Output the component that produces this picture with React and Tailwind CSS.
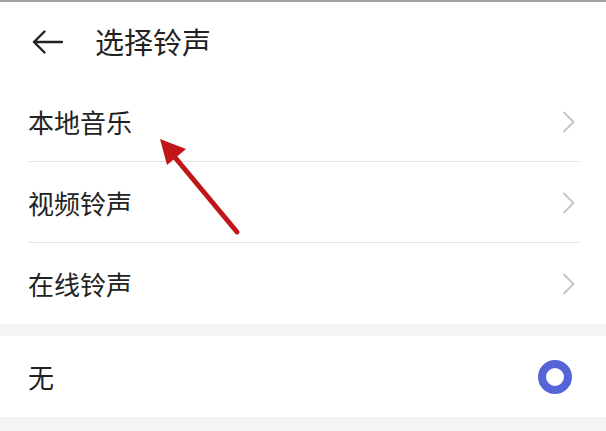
import React from "react";

function Chevron() {
  return (
    <svg width="14" height="22" viewBox="0 0 14 22" fill="none">
      <path d="M2 1.5 L11.5 11 L2 20.5" stroke="#c4c4c4" strokeWidth="1.8" strokeLinecap="round" strokeLinejoin="round" />
    </svg>
  );
}

function Row({ label, divider }) {
  return (
    <div className="relative flex h-[81px] items-center justify-between pl-[28px] pr-[30px]">
      <span className="text-[26px] leading-none text-[#222]">{label}</span>
      <Chevron />
      {divider && <div className="absolute bottom-0 left-[28px] right-[27px] h-px bg-[#e3e3e3]" />}
    </div>
  );
}

export default function App() {
  return (
    <div
      className="relative flex h-[431px] w-[606px] flex-col overflow-hidden border-t-2 border-[#a3a3a3] bg-white"
      style={{ fontFamily: '"Noto Sans CJK SC", "Noto Sans", sans-serif' }}
    >
      <div className="flex h-[79px] items-center pl-[32px]">
        <svg width="31" height="24" viewBox="0 0 31 24" fill="none">
          <path d="M30 12 H2 M12.5 1.5 L2 12 L12.5 22.5" stroke="#222" strokeWidth="2.4" strokeLinecap="round" strokeLinejoin="round" />
        </svg>
        <span className="ml-[32px] text-[29px] leading-none text-[#222]">选择铃声</span>
      </div>
      <Row label="本地音乐" divider />
      <Row label="视频铃声" divider />
      <Row label="在线铃声" />
      <div className="h-[12px] bg-[#f4f4f4]" />
      <div className="flex h-[81px] items-center justify-between pl-[28px] pr-[34px]">
        <span className="text-[26px] leading-none text-[#222]">无</span>
        <div className="h-[34px] w-[34px] rounded-full border-[8px] border-[#5565d8]" />
      </div>
      <div className="flex-1 bg-[#f4f4f4]" />
      <svg className="pointer-events-none absolute left-0 top-0" width="606" height="431" viewBox="0 0 606 431">
        <line x1="237" y1="230" x2="168" y2="147" stroke="#c0161a" strokeWidth="5" strokeLinecap="round" />
        <path d="M160 137 L186 147 L167 163 Z" fill="#c0161a" />
      </svg>
    </div>
  );
}
